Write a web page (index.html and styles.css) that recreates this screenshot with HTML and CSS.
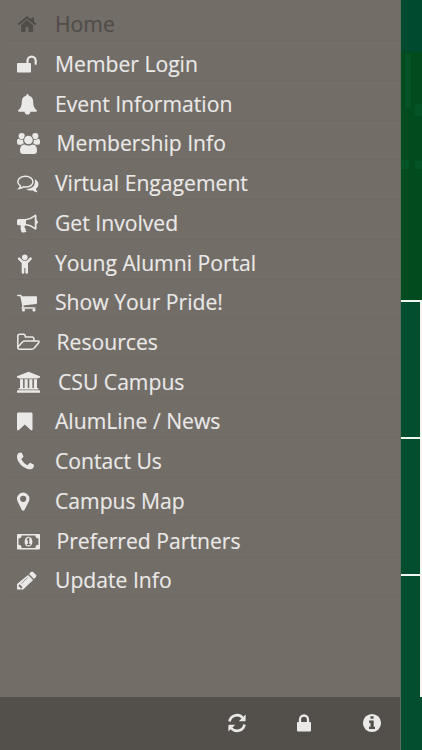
FILE: index.html
```
<!DOCTYPE html>
<html lang="en">
<head>
<meta charset="utf-8">
<title>Menu</title>
<link rel="stylesheet" href="styles.css">
</head>
<body>
<div class="app">
  <aside class="drawer">
    <nav class="menu">
      <a class="item current"><svg class="icon" viewBox="0 0 24 24"><path d="M1.300 12.600 10 5.400l8.700 7.200" fill="none" stroke="currentColor" stroke-width="2"/><path d="M14.300 5.500H17v6l-2.700-2.300ZM4 13l6-5 6 5v6q0 1-1 1h-3.500v-5h-3v5H5q-1 0-1-1Z"/></svg><span>Home</span></a>
      <a class="item"><svg class="icon" viewBox="0 0 24 24"><rect y="11" width="14" height="9.600" rx="1"/><path d="M10.500 12V8.800a4.100 4.100 0 0 1 8.200 0v3" fill="none" stroke="currentColor" stroke-width="2.200" stroke-linecap="round"/></svg><span>Member Login</span></a>
      <a class="item"><svg class="icon" viewBox="0 0 24 24"><path d="M10.500 2q1.300 0 1.300 1.800 4.400 1.100 4.400 6.200 0 6 3.800 8.500 0 1.300-1.200 1.300h-5.500a2.800 2.800 0 0 1-5.600 0H2.200Q1 19.800 1 18.500 4.800 16 4.800 10q0-5.100 4.400-6.200Q9.200 2 10.500 2Z"/></svg><span>Event Information</span></a>
      <a class="item wide"><svg class="icon" viewBox="0 0 24 24"><circle cx="4.700" cy="5" r="3.100"/><circle cx="18.300" cy="5" r="3.100"/><path d="M0 11q0-3.200 1.700-3.200 3 1.700 4.500.4-.2 3 .8 4.300-1.500.1-2.500 1.300H2q-2 0-2-2ZM23 11q0-3.200-1.700-3.200-3 1.700-4.500.4.200 3-.8 4.300 1.500.1 2.500 1.300H21q2 0 2-2Z"/><circle class="cut" cx="11.500" cy="9" r="5.100"/><circle cx="11.500" cy="9" r="4.300"/><path d="M7.300 13.600q4.200 2.300 8.400 0Q20 14 20 19.500q0 3.500-3.200 3.500H6.200Q3 23 3 19.500q0-5.500 4.300-5.900Z"/></svg><span>Membership Info</span></a>
      <a class="item"><svg class="icon" viewBox="0 0 24 24"><path d="M8.400 5.200c4.300 0 7.600 2.400 7.600 5.500s-3.300 5.400-7.600 5.400l-1.900-.2q-2 1.500-4.400 1.700 1.200-1.200 1.400-2.700Q.8 13.300.8 10.700c0-3.100 3.300-5.500 7.600-5.500Z" fill="none" stroke="currentColor" stroke-width="1.500"/><path d="M17.800 8.300q3.700 1.800 3.700 4.900 0 2.700-2.600 4.500.3 1.800 1.600 3.200-.2.500-.8.400-2.400-.4-4.200-2-3.400.6-6.300-.9 8.600-1 8.900-7.400Z"/></svg><span>Virtual Engagement</span></a>
      <a class="item"><svg class="icon" viewBox="0 0 24 24"><path d="M1.600 8H9v6.300q-1.600.1-1.500 1.500 0 1.200 1.300 2.400-.8 1.300.8 2.300-1.700 1.500-5 .7-1.600-3.400-.8-6.900H1.600Q0 14.300 0 12.700V9.500Q0 8 1.600 8Z"/><path d="M8.500 8.700q5-.4 10-4.300v13.500q-5-3.900-10-4.300" fill="none" stroke="currentColor" stroke-width="1.500" stroke-linejoin="round"/><path d="M18 3.800q1.400 0 1.400 1.400v4q1.600.3 1.600 1.900t-1.600 1.900v4q0 1.400-1.400 1.400Z"/></svg><span>Get Involved</span></a>
      <a class="item"><svg class="icon" viewBox="0 0 24 24"><circle cx="7.800" cy="6.300" r="2.800"/><path d="M1.200 6.700q.8-.9 1.700 0l3.200 3.100h3.500l3.200-3.100q.9-.9 1.700 0 .8.900 0 1.800L11 12v9.600q0 1.200-1.300 1.200t-1.300-1.200V17H7.300v4.600q0 1.200-1.300 1.200t-1.300-1.200V12L1.200 8.500q-.8-.9 0-1.800Z"/></svg><span>Young Alumni Portal</span></a>
      <a class="item"><svg class="icon" viewBox="0 0 24 24"><path d="M.8 5.600h3.100l2.200 10.600-.9 1.800h12.600" fill="none" stroke="currentColor" stroke-width="1.500" stroke-linecap="round" stroke-linejoin="round"/><path d="M4.300 6.300h15q.7 0 .7.800v6q0 .7-.7.800L6 15.400Z"/><circle cx="6.500" cy="20" r="1.600"/><circle cx="17" cy="20" r="1.600"/></svg><span>Show Your Pride!</span></a>
      <a class="item wide"><svg class="icon" viewBox="0 0 24 24"><path d="M.8 17.300V6.200q0-1.900 1.900-1.900h3.700q1.900 0 1.900 1.900v.7H15q1.900 0 1.900 1.900v2.300M.8 17.300 5 12.400q1.100-1.300 2.800-1.300h13q2.200 0 .7 1.800l-4 4.900q-1.300 1.500-3 1.500H2.700q-1.900 0-1.900-2Z" fill="none" stroke="currentColor" stroke-width="1.500" stroke-linejoin="round"/></svg><span>Resources</span></a>
      <a class="item widest"><svg class="icon" viewBox="0 0 24 24"><path d="m11.500 1.700 11.500 4.600v1.500h-1.500q0 .8-.8.800H2.300q-.8 0-.8-.8H0V6.300ZM3 9.300h3.100v8.600h1.500V9.300h3.100v8.600h1.600V9.300h3.100v8.600h1.500V9.300H20v8.600h.7q.8 0 .8.800v.7h-20v-.7q0-.8.8-.8H3ZM.8 20.200h21.400q.8 0 .8.800v1.700H0V21q0-.8.8-.8Z"/></svg><span>CSU Campus</span></a>
      <a class="item"><svg class="icon" viewBox="0 0 24 24"><path d="M1.400 3.500h12.700q1.400 0 1.400 1.400v15.200q0 2-1.800.9l-5.900-5.500L1.900 21q-1.900 1.200-1.900-.9V4.900q0-1.400 1.400-1.400Z"/></svg><span>AlumLine / News</span></a>
      <a class="item"><svg class="icon" viewBox="0 0 24 24"><path d="M3.800 3.600q.6-.3 1 .5L6.300 7q.4.700-.3 1.300L4.600 9.700q-.4.500 0 1.100 2 3.600 5.300 5.300.7.400 1.200-.3l1.200-1.500q.5-.7 1.200-.3l3 1.600q.6.300.5.900-.3 2.700-2.200 3.400-2.300.9-4.800-.1Q2.700 17 .4 10.200-.5 7.500.6 5.300q.7-1.400 3.200-1.700Z"/></svg><span>Contact Us</span></a>
      <a class="item"><svg class="icon" viewBox="0 0 24 24"><path fill-rule="evenodd" d="M6.200 3.600a6.200 6.200 0 0 1 6.200 6.200q0 1.400-.5 2.500l-4.400 8.700q-.4.800-1.300.8T4.900 21L.5 12.300Q0 11.200 0 9.800a6.200 6.200 0 0 1 6.200-6.200Zm0 3.100a3.100 3.100 0 1 0 0 6.200 3.100 3.100 0 0 0 0-6.200Z"/></svg><span>Campus Map</span></a>
      <a class="item wide"><svg class="icon" viewBox="0 0 24 24"><path fill-rule="evenodd" d="M.8 5h21.400q.8 0 .8.800v13.800q0 .8-.8.800H.8q-.8 0-.8-.8V5.800Q0 5 .8 5Zm3.800 1.500q0 3-3.100 3.100v6.200q3.100.1 3.100 3.100h13.800q0-3 3.100-3.100V9.600q-3.100-.1-3.100-3.100Z"/><ellipse cx="11.500" cy="12.700" rx="3.900" ry="4.900"/><path class="cutline" d="m9.900 10.900 1.700-1.200v5.600M9.800 15.600h3.600"/></svg><span>Preferred Partners</span></a>
      <a class="item"><svg class="icon" viewBox="0 0 24 24"><path fill-rule="evenodd" d="m11 6.900 5.100 5.100L6.200 21.500H0v-5.600ZM2.700 16.300l-1.100 1.100v1.400h1.600v1.500h1.300l1.100-1.100Z"/><path d="m12 5.900 2-2q1-1 2.100 0l2.900 2.900q.9 1 0 2l-2 2.100Z"/><path class="cutline thin" d="m4.500 15.600 6.200-6.200"/></svg><span>Update Info</span></a>
    </nav>
    <footer class="toolbar">
      <svg class="tool" viewBox="0 0 20 20"><path d="M2.500 8.500A7.500 7.500 0 0 1 15.800 5M17.500 11.500A7.500 7.500 0 0 1 4.200 15" fill="none" stroke="currentColor" stroke-width="2.600"/><path d="M18.600 1.400v6q0 .8-.8.800h-6ZM1.400 18.600v-6q0-.8.800-.8h6Z"/></svg>
      <svg class="tool" viewBox="0 0 20 20"><rect x="3" y="9" width="14" height="9.500" rx="1"/><path d="M6 10V6.500a4 4 0 0 1 8 0V10" fill="none" stroke="currentColor" stroke-width="2.300"/></svg>
      <svg class="tool" viewBox="0 0 20 20"><circle cx="10" cy="10" r="9.100"/><path class="cut" d="M8.500 3.300h3v2.500h-3ZM7.200 7.600h4.500v6.100H13V16H7v-2.300h1.500V9.900H7.200Z"/></svg>
    </footer>
  </aside>
  <main class="page">
    <div class="band"></div>
    <div class="photo"><i class="stroke tall"></i><i class="stroke comma"></i><i class="stroke low"></i><i class="stroke dot"></i></div>
    <div class="tiles"><div class="tile"></div><div class="tile"></div><div class="tile"></div></div>
    <div class="base"></div>
  </main>
</div>
</body>
</html>
```
FILE: styles.css
```
body {
  margin: 0;
  font-family: "Open Sans", sans-serif;
}
.app {
  display: flex;
  width: 422px;
  height: 750px;
  overflow: hidden;
}
.drawer {
  display: flex;
  flex-direction: column;
  box-sizing: border-box;
  width: 401px;
  background: #726d67;
  color: #ebe9e8;
  border-right: 1px solid #606d5d;
}
.menu {
  flex: 1;
  padding-top: 1.5px;
}
.item {
  display: flex;
  align-items: flex-start;
  box-sizing: border-box;
  height: 39.72px;
  margin-left: 5px;
  padding: 10.7px 0 0 12px;
  border-bottom: 1px solid #6f6a64;
  font-size: 21.15px;
  line-height: 24px;
  white-space: nowrap;
  -webkit-text-stroke: 0.15px currentColor;
}
.icon {
  flex: none;
  width: 24px;
  height: 24px;
  margin-right: 14px;
  fill: currentColor;
}
.icon .cut {
  fill: #726d67;
}
.wide .icon {
  margin-right: 15.5px;
}
.widest .icon {
  margin-right: 17px;
}
.current {
  color: #504c48;
}
.cutline {
  fill: none;
  stroke: #726d67;
  stroke-width: 1.4;
}
.thin {
  stroke-width: 0.7;
}
.toolbar {
  display: flex;
  justify-content: flex-end;
  align-items: center;
  gap: 47.5px;
  box-sizing: border-box;
  height: 53px;
  padding: 0 18.5px 2px 0;
  background: #53504b;
}
.tool {
  width: 20px;
  height: 20px;
  fill: currentColor;
}
.tool .cut {
  fill: #53504b;
}
.page {
  display: flex;
  flex-direction: column;
  width: 21px;
  background: #024e2e;
}
.band {
  height: 52px;
  background: #004b30;
}
.photo {
  position: relative;
  height: 248px;
  background: #024b1e;
  overflow: hidden;
}
.stroke {
  position: absolute;
  background: #045326;
}
.tall {
  left: 4px;
  top: 2px;
  width: 6px;
  height: 54px;
}
.comma {
  left: 14px;
  top: 52px;
  width: 7px;
  height: 12px;
}
.low {
  left: 0;
  top: 108px;
  width: 8px;
  height: 9px;
}
.dot {
  left: 14px;
  top: 109px;
  width: 7px;
  height: 8px;
}
.tiles {
  display: flex;
  flex-direction: column;
  height: 397px;
  overflow: hidden;
}
.tile {
  flex: none;
  box-sizing: border-box;
  height: 137px;
  border-top: 2px solid #f2f6f3;
  border-right: 2px solid #f2f6f3;
}
.base {
  flex: 1;
}
```
